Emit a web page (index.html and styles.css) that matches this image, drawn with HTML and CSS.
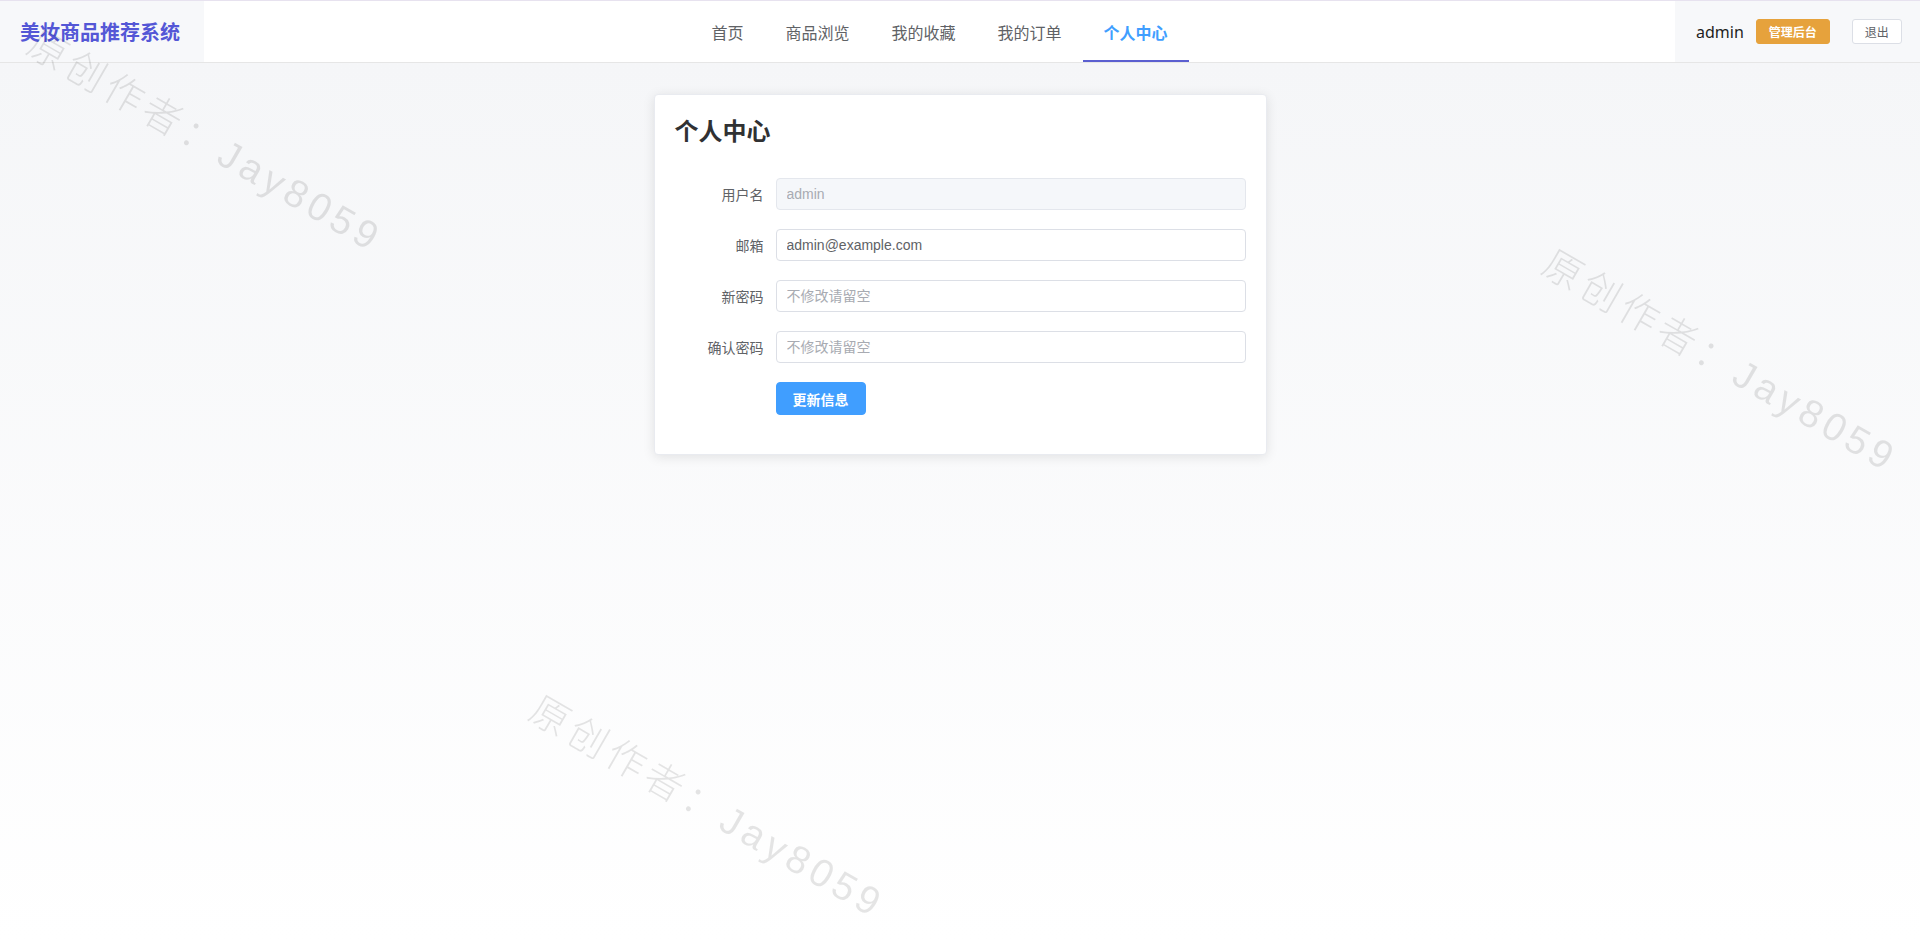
FILE: index.html
```html
<!DOCTYPE html>
<html lang="zh-CN">
<head>
    <meta charset="UTF-8">
    <meta name="viewport" content="width=device-width, initial-scale=1.0">
    <title>个人中心 - 美妆商品推荐系统</title>
    <link rel="stylesheet" href="styles.css">
</head>
<body>
    <header class="header">
        <div class="logo">美妆商品推荐系统</div>
        <nav class="nav">
            <a class="nav-item">首页</a>
            <a class="nav-item">商品浏览</a>
            <a class="nav-item">我的收藏</a>
            <a class="nav-item">我的订单</a>
            <a class="nav-item active">个人中心</a>
        </nav>
        <div class="user-area">
            <span class="username">admin</span>
            <button class="btn btn-warning">管理后台</button>
            <button class="btn btn-plain">退出</button>
        </div>
    </header>

    <main class="main">
        <div class="card">
            <h2 class="card-title">个人中心</h2>
            <form class="profile-form">
                <div class="form-item">
                    <label class="form-label">用户名</label>
                    <input class="form-input" type="text" value="admin" disabled>
                </div>
                <div class="form-item">
                    <label class="form-label">邮箱</label>
                    <input class="form-input" type="text" value="admin@example.com">
                </div>
                <div class="form-item">
                    <label class="form-label">新密码</label>
                    <input class="form-input" type="password" placeholder="不修改请留空">
                </div>
                <div class="form-item">
                    <label class="form-label">确认密码</label>
                    <input class="form-input" type="password" placeholder="不修改请留空">
                </div>
                <div class="form-item">
                    <span class="form-label"></span>
                    <button type="button" class="btn-primary">更新信息</button>
                </div>
            </form>
        </div>
    </main>

    <!-- 水印 -->
    <div class="watermark">
        <span class="wm wm-1">原创作者：Jay8059</span>
        <span class="wm wm-2">原创作者：Jay8059</span>
        <span class="wm wm-3">原创作者：Jay8059</span>
    </div>
</body>
</html>
```

FILE: styles.css
```css
body {
    margin: 0;
    font-family: "Liberation Sans", "Noto Sans CJK SC", sans-serif;
    color: #303133;
    background: #fff;
    min-height: 942px;
    display: flex;
    flex-direction: column;
}
.header {
    display: flex;
    height: 61px;
    border-top: 1px solid #e7e2ef;
    border-bottom: 1px solid #e6e6e6;
    background: #f7f8fa;
}
.logo {
    width: 204px;
    box-sizing: border-box;
    padding: 0 20px;
    display: flex;
    align-items: center;
    font-size: 20px;
    font-weight: bold;
    color: #5457d6;
    white-space: nowrap;
}
.nav {
    flex: 1;
    display: flex;
    justify-content: center;
    background: #fff;
}
.nav-item {
    height: 61px;
    box-sizing: border-box;
    padding: 2px 21px 0;
    display: flex;
    align-items: center;
    font-size: 16px;
    color: #606266;
    border-bottom: 2px solid transparent;
    cursor: pointer;
}
.nav-item.active {
    color: #409eff;
    font-weight: bold;
    border-bottom-color: #5b5fd0;
}
.user-area {
    width: 245px;
    flex-shrink: 0;
    box-sizing: border-box;
    padding: 0 20px 0 21px;
    display: flex;
    align-items: center;
}
.username {
    font-family: "Noto Sans", "Noto Sans CJK SC", sans-serif;
    font-size: 16px;
    color: #1f1f1f;
    margin-right: 12px;
}
.btn {
    flex-shrink: 0;
    white-space: nowrap;
    height: 25px;
    padding: 0 12px;
    font-size: 12px;
    font-family: "Noto Sans CJK SC", sans-serif;
    border-radius: 3px;
    border: 1px solid #dcdfe6;
    cursor: pointer;
    line-height: 1;
}
.btn-warning {
    background: #e6a23c;
    border-color: #e6a23c;
    color: #fff;
    font-weight: bold;
}
.btn-plain {
    margin-left: 22px;
    background: #fff;
    color: #606266;
}
.main {
    flex: 1;
    padding-top: 31px;
    background: linear-gradient(180deg, #f5f6f8 0%, #ffffff 100%);
}
.card {
    width: 613px;
    box-sizing: border-box;
    margin: 0 auto;
    padding: 20px;
    background: #fff;
    border: 1px solid #e9ebf0;
    border-radius: 4px;
    box-shadow: 0 2px 12px rgba(0, 0, 0, 0.1);
}
.card-title {
    margin: 0 0 30px;
    font-size: 24px;
    line-height: 33px;
    color: #303133;
}
.form-item {
    display: flex;
    align-items: center;
    margin-bottom: 19px;
}
.form-label {
    width: 101px;
    flex-shrink: 0;
    box-sizing: border-box;
    padding-right: 12px;
    text-align: right;
    font-size: 14px;
    color: #606266;
}
.form-input {
    flex: 1;
    height: 32px;
    box-sizing: border-box;
    padding: 0 10px;
    font-size: 14px;
    font-family: "Liberation Sans", "Noto Sans CJK SC", sans-serif;
    color: #606266;
    background: #fff;
    border: 1px solid #dcdfe6;
    border-radius: 4px;
    outline: none;
}
.form-input::placeholder {
    color: #a8abb2;
}
.form-input:disabled {
    background: #f5f7fa;
    border-color: #e4e7ed;
    color: #a8abb2;
}
.btn-primary {
    height: 33px;
    padding: 0 16px;
    font-size: 14px;
    font-weight: bold;
    font-family: "Noto Sans CJK SC", sans-serif;
    color: #fff;
    background: #409eff;
    border: 1px solid #409eff;
    border-radius: 4px;
    cursor: pointer;
}
.watermark {
    position: fixed;
    inset: 0;
    pointer-events: none;
    overflow: hidden;
    z-index: 100;
}
.wm {
    position: absolute;
    transform: translate(-50%, -50%) rotate(30deg);
    font-family: "Liberation Sans", "Noto Sans CJK SC", sans-serif;
    font-size: 39px;
    font-weight: 300;
    letter-spacing: 5px;
    color: rgba(0, 0, 0, 0.1);
    white-space: nowrap;
}
.wm-1 { left: 207px; top: 138px; }
.wm-2 { left: 1722px; top: 358px; }
.wm-3 { left: 709px; top: 804px; }
```
